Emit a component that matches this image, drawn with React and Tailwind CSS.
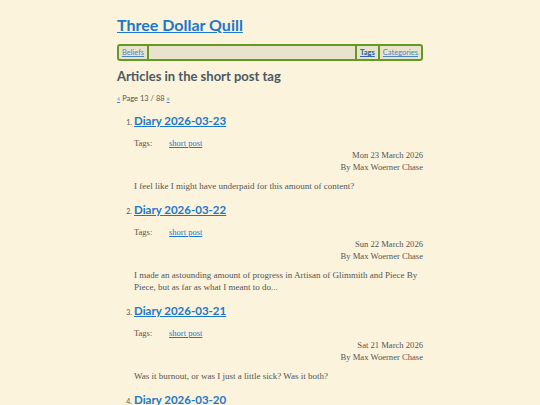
import React from 'react';

const posts = [
  {
    n: 1,
    title: 'Diary 2026-03-23',
    date: 'Mon 23 March 2026',
    excerpt: 'I feel like I might have underpaid for this amount of content?',
  },
  {
    n: 2,
    title: 'Diary 2026-03-22',
    date: 'Sun 22 March 2026',
    excerpt:
      'I made an astounding amount of progress in Artisan of Glimmith and Piece By Piece, but as far as what I meant to do...',
  },
  {
    n: 3,
    title: 'Diary 2026-03-21',
    date: 'Sat 21 March 2026',
    excerpt: 'Was it burnout, or was I just a little sick? Was it both?',
  },
  {
    n: 4,
    title: 'Diary 2026-03-20',
    date: 'Fri 20 March 2026',
    excerpt: 'Not much to say today.',
  },
];

const sans = "font-['Lato','Open_Sans',sans-serif]";
const slab = "font-['Liberation_Serif','DejaVu_Serif',serif]";

const Post = ({ post }) => (
  <li className="mt-[10px] first:mt-0">
    <div className="flex items-baseline">
      <span className={`${sans} w-[17px] text-right pr-[2px] text-[7px] text-[#555]`}>{post.n}.</span>
      <a href="#" className={`${sans} text-[11.5px] leading-[16px] font-bold text-[#1d78c8] underline`}>
        {post.title}
      </a>
    </div>
    <div className={`${slab} pl-[17px] text-[#555]`}>
      <div className="mt-[8px] flex text-[8.5px] leading-[12px]">
        <span className="w-[35px]">Tags:</span>
        <a href="#" className="text-[#1f78cc] underline">short post</a>
      </div>
      <div className="text-right text-[8.6px] leading-[12px]">
        <div>{post.date}</div>
        <div>By Max Woerner Chase</div>
      </div>
      <p className="mt-[7px] text-[9px] leading-[12px]">{post.excerpt}</p>
    </div>
  </li>
);

const App = () => {
  return (
    <div className="min-h-screen bg-[#fbf3dc]">
      <div className="w-[306px] mx-auto pt-[14px]">
        <h1 className={`${sans} text-[16px] leading-[22px] font-bold`}>
          <a href="#" className="text-[#1d78c8] underline">Three Dollar Quill</a>
        </h1>

        <nav className={`${sans} mt-[8px] h-[17px] flex items-stretch rounded-[3px] border-2 border-[#649a22] bg-[#e9e3cd] text-[7.5px]`}>
          <a href="#" className="flex items-center px-[3px] border-r-2 border-[#649a22] text-[#4a86c0] underline">Beliefs</a>
          <div className="flex-1" />
          <a href="#" className="flex items-center px-[3px] border-l-2 border-[#649a22] text-[#2f6aa5] font-black underline">Tags</a>
          <a href="#" className="flex items-center px-[3px] border-l-2 border-[#649a22] text-[#4a86c0] underline">Categories</a>
        </nav>

        <h2 className={`${sans} mt-[7px] text-[13px] leading-[16px] font-bold text-[#4c5963]`}>
          Articles in the short post tag
        </h2>

        <div className={`${sans} mt-[10px] text-[7.5px] leading-[10px] text-[#555]`}>
          <a href="#" className="text-[#4a86c0] underline">«</a> Page 13 / 88{' '}
          <a href="#" className="text-[#4a86c0] underline">»</a>
        </div>

        <ol className="mt-[9px]">
          {posts.map((p) => (
            <Post key={p.n} post={p} />
          ))}
        </ol>
      </div>
    </div>
  );
};

export default App;
